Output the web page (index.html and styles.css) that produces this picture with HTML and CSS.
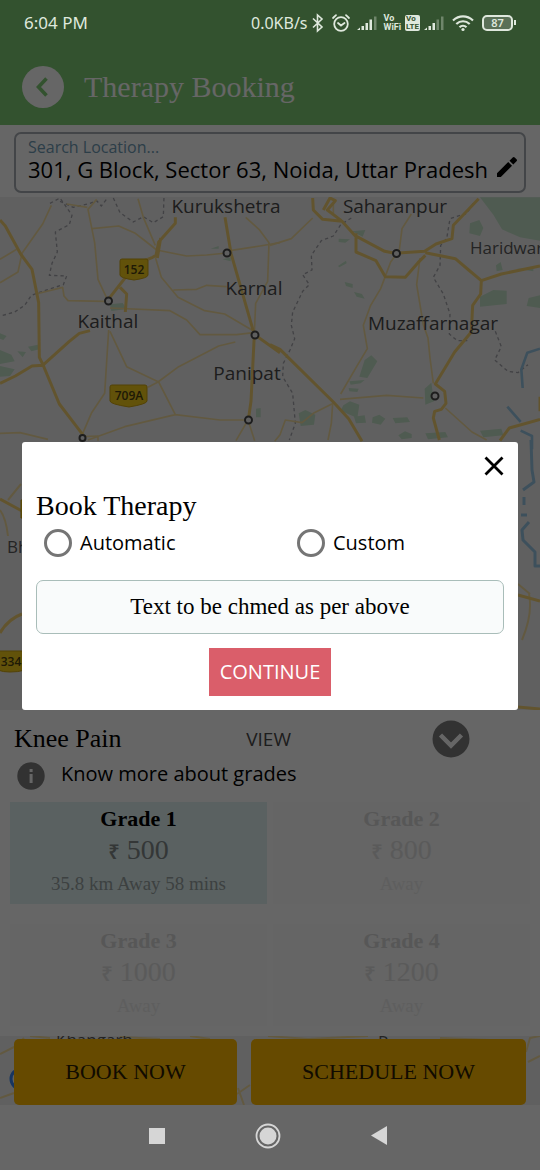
FILE: index.html
```html
<!DOCTYPE html>
<html lang="en">
<head>
<meta charset="utf-8">
<meta name="viewport" content="width=device-width, initial-scale=1">
<title>Therapy Booking</title>
<link rel="stylesheet" href="styles.css">
</head>
<body>
<div class="app">
  <div class="status">
    <span class="status-time">6:04 PM</span>
    <div class="status-icons">
      <span class="status-speed">0.0KB/s</span>
      <svg width="12" height="20" viewBox="0 0 12 20" fill="none" stroke="currentColor" stroke-width="1.6"><path d="M1 5.500l9 8.500-4.500 4V2l4.500 4-9 8.500"/></svg>
      <svg class="gap-s" width="20" height="20" viewBox="0 0 20 20" fill="none" stroke="currentColor" stroke-width="1.800" stroke-linecap="round"><circle cx="10" cy="11" r="6.800"/><path d="M2 5l3-2.800M18 5l-3-2.800M7 10l3 2.500 3.500-2.500"/></svg>
      <svg class="gap-t" width="20" height="16" viewBox="0 0 20 16" fill="currentColor"><path d="M0 15L3 12.500V15zM4.500 11H7v4H4.500zM8.500 8H11v7H8.500zM12.500 4.500H15V15h-2.500z"/><path opacity=".35" d="M17 1.500h2.500V15H17z"/></svg>
      <div class="status-vo"><div>Vo</div><div>WiFi</div></div>
      <div class="status-lte"><div>Vo</div><div>LTE</div></div>
      <svg width="20" height="16" viewBox="0 0 20 16" fill="currentColor"><path d="M0 15L3 12.500V15zM4.500 11H7v4H4.500zM8.500 8H11v7H8.500z"/><path opacity=".35" d="M12.500 4.500H15V15h-2.500zM17 1.500h2.500V15H17z"/></svg>
      <svg class="gap-m" width="22" height="18" viewBox="0 0 22 18" fill="none" stroke="currentColor" stroke-width="2.200"><path d="M1 6.500c6-5.400 14-5.400 20 0M4.300 10c4-3.700 9.400-3.700 13.400 0M7.500 13.300c2-1.900 5-1.900 7 0"/><circle cx="11" cy="15.500" r="1.600" fill="currentColor" stroke="none"/></svg>
      <div class="battery"><span class="battery-level">87</span><i class="battery-tip"></i></div>
    </div>
  </div>

  <header class="header">
    <button class="back" type="button" aria-label="Back">
      <svg width="18" height="22" viewBox="0 0 18 22" fill="none" stroke="currentColor" stroke-width="3.600"><path d="M12.500 2.500L4.500 11l8 8.500"/></svg>
    </button>
    <h1 class="title">Therapy Booking</h1>
  </header>

  <div class="search">
    <div class="search-box">
      <div class="search-field">
        <label class="search-label" for="loc">Search Location...</label>
        <input class="search-input" id="loc" type="text" value="301, G Block, Sector 63, Noida, Uttar Pradesh">
      </div>
      <button class="edit" type="button" aria-label="Edit location">
        <svg width="22" height="22" viewBox="0 0 22 22" fill="currentColor"><path d="M1 17.200V21h3.800L16 9.800 12.200 6zM20.500 5.300a1.400 1.400 0 000-2L18.700 1.500a1.400 1.400 0 00-2 0L13.500 4.700l3.800 3.800z"/></svg>
      </button>
    </div>
  </div>

  <main class="stage">
    <svg class="map" viewBox="0 197 540 908" preserveAspectRatio="xMidYMin slice" fill="none" stroke-linejoin="round">
      <g transform="translate(0 190) scale(.33333)">
        <g fill="#c5e3ca"><path d="M330 343l38-4 12 18-46 6zM0 430l20 8-10 12-10-4zM0 480l34 14 10 20-44 8zM52 484l26 2-10 16zM0 528l44 10-14 20-30 2zM84 470l30-6 4 14-24 6zM768 656l14-2v28h-14zM632 176l24-8v8zM668 208l24-6v12z"/></g>
        <g class="border"><path d="M150 40l30-16 14 20 22 32-8 28-42 22 6 60-16 34-8 36 52 2-10 26-50 16-46 16-20 30-30 20-42 12"/><path d="M180 34l40 18 50-12 20-8 14 16 20-26M340 24l20 44 40 28 30-16 30 18 30-18 2-60"/></g>
        <g class="road"><path d="M200 42l62 10M290 28l-26 30 20 100 10 110 28 60M154 46l-26 56-62 88-12 56-54 32M0 208l50-30M276 116l80-8 50 22 26 20 38 30 90 18 60-3 60-6M414 26l16 56 36 84M690 182l90-14 60-10M737 82l40 36 30 40-4 116-36 66-4 90M466 202l18 60 50 60 80 40 60 10 88 52M520 300l70-2 30-12 60 4M108 312l80-20 4 26 12 14 110 2M330 354l180 8 50 28 40 44h110l50-6M706 456l-50 12-120 62-62 46-30 16M326 420l-12 190-40 60-30 70M330 424l50 106 96 46 50 98-152 36-110 40M526 674l134 16h84M744 690l-36 62M744 690l20 62M0 730l60-2 84 20M248 740l46-2v14"/></g>
        <g class="highway"><path d="M0 90l16 18 46 84 34 46 20 100 2 164 10 20 50 120 72 94M128 526l80-72 30-24 32-8M128 526l-32 2-50 30-46 22M526 82v18l-50 56-8 40-10 6-50 20-86 110M482 144l-10 60M360 292l20 20-4 54M675 82l18 108 70 244-10 200-8 56M764 434l76 54"/></g>
      </g>
      <g transform="translate(270 190) scale(.33333)">
        <g fill="#c5e3ca"><path d="M630 22h180v130l-60-10-54-24-26-44zM600 100l28-10 12 24-10 24-32-8zM630 320l40-20 40 2v40l-80 8zM776 324l34-8v38l-40-6zM678 226l14-10 6 24-18 4zM284 510l20-14 18 18-30 50-24-4zM220 646l20-12 28 10-6 40-50-22zM86 670l20-10 30 14-4 30-40 4zM252 680l32-4 4 22-30 2zM308 682l20-8 18 12-14 18-26-6zM368 684l44-2 8 14-44 4zM385 736l20-12 20 8v12l-30 4zM466 730l60-4 8 16-60 6zM630 722l64-6 6 20-60 6zM246 124l40-4-8 20zM206 146l34 2-14 10-20-2zM204 228l24-16 2 8-22 12zM224 276l24 6v12l-20-6zM252 306l24 6 8 14-24-6zM464 596l20-18 8 56-26 10zM238 574l46-4-12 10-30 4zM236 594l30 2-4 10-24-2zM740 236l50-2v10z"/></g>
        <g class="border"><path d="M244 84l-32 20-22 34-36 14-30 44 2 44-28 14 20 30-20 20-30 62-4 40 10 40-14 34-20 40-2 40 30 50 8 90-18 50M610 40l-20 30-50 16-10 60-18 20-2 60-20 36 30 50 20 60-2 60 24 20h30M676 424l18 46-20 40 40 34 30 4 30-24"/></g>
        <g class="river"><path d="M810 476l-38 12-18 50 4 56M712 650l40 46M752 722l34 16v40"/></g>
        <g class="road"><path d="M0 166l64-20 64-62M190 40v30M424 72l-28 44-8 64-26 36-30 80-30 50-22 60 12 70-30 50-50 86M450 204l-10 80 20 120 14 40 6 60 10 76M210 628l140-12 110 8M190 640l-60 30-34 28-50-8-16 44-16 20M188 640l-4 60-10 50M526 654l80 72 44 24"/></g>
        <g class="highway"><path d="M128 24l2 36 28 28 58 6 38 42 90 48 30 6 90-6 34-22 48-16 4-40 76-80M160 60l20-36 16 8-24 28 42 32M258 130v56l60 26 28 48 60 2 38-44 22-22M466 188l90 18 40 34 38 32 60-20 116-24M634 272l-2 40-24 34-4 80-50 60-58 96 28 22 4 36-14 18-20 6-4 20 18 66M0 464l30 14 160 158 46 50 40 68M690 752l28-38 92-26M810 620v44"/></g>
      </g>
      <g class="river"><path d="M531 440l1 30 2 12-11 8M524 497v8M521 515h6M529 522l-7 8 1 10 12 12v14h5"/></g>
      <g class="road"><path d="M8 500l13-16M0 510q6 8 8 26M529 594q4 20-7 46M518 584l12 10"/></g>
      <g class="highway"><path d="M0 499l22 12M0 633q8-14 22-19M518 595l22 6M518 707l22 2"/></g>
      <g class="road"><path d="M0 1054l16-8 8-8M0 1098l14-5M30 1036l20 2M120 1037l40 2M190 1036l20 3M268 1036l40 3 60-3M237 1094l13-9M238 1088l6 17M440 1038l50 2M526 1052l4-14 10-2M528 1062l12-6"/></g>
      <circle cx="21" cy="1079" r="10" stroke="#3a86f0" stroke-width="3"/>
      <g class="town"><circle cx="227" cy="253" r="3.500"/><circle cx="108.500" cy="301" r="3.500"/><circle cx="255" cy="335" r="3.500"/><circle cx="248.500" cy="420" r="3.500"/><circle cx="82.500" cy="438" r="3"/><circle cx="396.500" cy="253.500" r="3.500"/><circle cx="435" cy="396" r="3.500"/></g>
      <g class="shield"><path d="M120 261q0-2 2-2h24q2 0 2 2v14q0 3-14 5-14-2-14-5zM110 387q0-2 2-2h33q2 0 2 2v14q0 3-18 6-19-3-19-6zM-8 651h40v14q-5 7-22 7-14 0-18-7zM21 500h10v18H21z"/></g>
      <g class="shield-text"><text x="134" y="274">152</text><text x="129" y="400">709A</text><text x="15" y="666">334B</text></g>
      <g class="city"><text x="226" y="213">Kurukshetra</text><text x="395" y="213">Saharanpur</text><text x="254" y="295">Karnal</text><text x="108" y="328">Kaithal</text><text x="433" y="330">Muzaffarnagar</text><text x="247" y="380">Panipat</text></g>
      <g class="place"><text x="470" y="254">Haridwar</text><text x="7" y="553">Bhiwani</text><text x="56" y="1046">Khangarh</text><text x="378" y="1048">Rampur</text></g>
    </svg>

    <section class="sheet">
      <div class="sheet-row">
        <h2 class="condition">Knee Pain</h2>
        <a class="view" href="#view">VIEW</a>
        <button class="toggle" type="button" aria-label="Collapse">
          <svg width="38" height="38" viewBox="0 0 38 38"><circle cx="19" cy="19" r="18.500" fill="#7d7d7d"/><path d="M8.500 15l10.500 10.500L29.500 15" fill="none" stroke="#fff" stroke-width="4.500"/></svg>
        </button>
      </div>
      <div class="info">
        <svg width="28" height="28" viewBox="0 0 28 28"><circle cx="14" cy="14" r="13.700" fill="#7d7d7d"/><path d="M12.600 7h3v3h-3zM12.600 12h3v9h-3z" fill="#fff"/></svg>
        <span class="info-text">Know more about grades</span>
      </div>
      <div class="grades">
        <button class="grade grade-on" type="button"><span class="grade-name">Grade 1</span><span class="grade-price"><span class="rupee">₹</span> 500</span><span class="grade-far">35.8 km Away 58 mins</span></button>
        <button class="grade" type="button"><span class="grade-name">Grade 2</span><span class="grade-price"><span class="rupee">₹</span> 800</span><span class="grade-far">Away</span></button>
        <button class="grade" type="button"><span class="grade-name">Grade 3</span><span class="grade-price"><span class="rupee">₹</span> 1000</span><span class="grade-far">Away</span></button>
        <button class="grade" type="button"><span class="grade-name">Grade 4</span><span class="grade-price"><span class="rupee">₹</span> 1200</span><span class="grade-far">Away</span></button>
      </div>
    </section>
    <div class="actions">
      <button class="action" type="button">BOOK NOW</button>
      <button class="action action-wide" type="button">SCHEDULE NOW</button>
    </div>
  </main>

  <nav class="nav">
    <button class="nav-btn" type="button" aria-label="Recent apps"><svg width="16" height="16" viewBox="0 0 16 16"><path d="M0 0h16v16H0z" fill="currentColor"/></svg></button>
    <button class="nav-btn" type="button" aria-label="Home"><svg width="26" height="26" viewBox="0 0 26 26"><circle cx="13" cy="13" r="11.500" fill="none" stroke="currentColor" stroke-width="1.800"/><circle cx="13" cy="13" r="8.500" fill="currentColor"/></svg></button>
    <button class="nav-btn" type="button" aria-label="Back"><svg width="16" height="19" viewBox="0 0 16 19"><path d="M16 0v19L0 9.500z" fill="currentColor"/></svg></button>
  </nav>

  <div class="overlay">
    <form class="dialog" role="dialog" aria-labelledby="dlg-title">
      <button class="close" type="button" aria-label="Close">
        <svg width="20" height="20" viewBox="0 0 20 20" fill="none" stroke="currentColor" stroke-width="2.800"><path d="M1.500 1.500l17 17M18.500 1.500l-17 17"/></svg>
      </button>
      <h2 class="dialog-title" id="dlg-title">Book Therapy</h2>
      <div class="options">
        <label class="option"><input class="radio" type="radio" name="mode">Automatic</label>
        <label class="option"><input class="radio" type="radio" name="mode">Custom</label>
      </div>
      <p class="note">Text to be chmed as per above</p>
      <button class="continue" type="button">CONTINUE</button>
    </form>
  </div>
</div>
</body>
</html>
```

FILE: styles.css
```css
* { box-sizing: border-box; }

body {
  margin: 0;
  background: #fff;
  color: #000;
  font-family: "Open Sans", "Noto Sans", sans-serif;
}

button {
  margin: 0;
  padding: 0;
  border: 0;
  background: none;
  color: inherit;
  font: inherit;
}

h1, h2, p { margin: 0; font-weight: 400; }
svg { display: block; flex: none; }

.app {
  position: relative;
  display: flex;
  flex-direction: column;
  min-height: 100vh;
  overflow: hidden;
}

/* System status bar, kept bright over the backdrop */
.status {
  display: flex;
  align-items: center;
  justify-content: space-between;
  height: 45px;
  padding: 0 24px;
  position: relative;
  z-index: 2;
  color: #dfe8dd;
  font-family: "Noto Sans", sans-serif;
  font-size: 17px;
}
.status-icons { display: flex; align-items: center; gap: 4px; }
.status-speed { font-size: 16px; }
.gap-s { margin-left: 3px; }
.gap-t { margin-left: 2px; }
.gap-m { margin-left: 4px; }
.status-vo, .status-lte {
  font-family: Roboto, sans-serif;
  font-size: 9px;
  line-height: 9px;
  font-weight: 700;
}
.status-vo { margin-left: 3px; }
.status-lte {
  padding: 0 1px;
  border-radius: 2px;
  background: #dfe8dd;
  color: #33522f;
  font-size: 8px;
  line-height: 8px;
}
.battery { display: flex; align-items: center; gap: 1px; margin-left: 4px; }
.battery-level {
  width: 31px;
  border: 2px solid currentColor;
  border-radius: 5px;
  background: #5a7057;
  font-size: 11px;
  line-height: 12px;
  font-weight: 600;
  text-align: center;
}
.battery-tip { width: 2px; height: 5px; background: currentColor; }

.header {
  display: flex;
  align-items: center;
  gap: 20px;
  height: 125px;
  margin-top: -45px;
  padding: 48px 22px 0;
  background: #80cd76;
}
.back {
  display: grid;
  place-items: center;
  width: 42px;
  height: 42px;
  border-radius: 50%;
  background: #fff;
  color: #80cd76;
}
.title { font-family: "Liberation Serif", serif; font-size: 30px; color: #fff; }

.search { padding: 7px 14px 4px; }
.search-box {
  display: flex;
  align-items: center;
  padding: 3px 6px 7px 12px;
  border: 2px solid #a8adb3;
  border-radius: 7px;
}
.search-field { flex: 1; min-width: 0; }
.search-label { display: block; font-size: 16px; line-height: 20px; color: #6f9bb5; }
.search-input {
  display: block;
  width: 100%;
  height: 27px;
  padding: 0 0 4px;
  border: 0;
  background: none;
  color: #000;
  font-family: inherit;
  font-size: 22px;
}
.edit { padding-top: 12px; }

.stage {
  position: relative;
  flex: 1;
  display: flex;
  flex-direction: column;
  justify-content: flex-end;
}
.map { position: absolute; inset: 0; width: 100%; height: 100%; background: #f0f0f0; }
.road { stroke: #f5dea0; stroke-width: 5; }
.highway { stroke: #f5d273; stroke-width: 9; }
.map > .road { stroke-width: 2; }
.map > .highway { stroke-width: 3; }
.border { stroke: #a5a5ac; stroke-width: 4; stroke-dasharray: 10 9; }
.river { stroke: #9ac8e6; stroke-width: 8; }
.map > .river { stroke-width: 3; }
.town { fill: #eee; stroke: #4a4a4a; stroke-width: 2; }
.shield { fill: #f5cc1a; stroke: #cfa510; stroke-width: 1; }
.shield-text { fill: #4c4210; font-size: 12px; font-weight: 600; text-anchor: middle; }
.city { fill: #4a4a4a; font-size: 19px; text-anchor: middle; }
.place { fill: #5a5a5a; font-size: 17px; }

.sheet { position: relative; padding: 10px; background: #fff; }
.sheet-row {
  display: grid;
  grid-template-columns: 45fr 36fr 19fr;
  align-items: center;
  padding-left: 4px;
}
.condition { font-family: "Liberation Serif", serif; font-size: 26px; }
.view { font-size: 19px; line-height: 36px; color: #4a4a4a; text-decoration: none; }
.toggle { justify-self: start; }
.info {
  display: flex;
  align-items: flex-end;
  gap: 16px;
  padding: 0 7px 12px;
  font-size: 20px;
}
.info-text { line-height: 32px; }
.grades { display: grid; grid-template-columns: 1fr 1fr; gap: 20px 6px; }
.grade {
  display: flex;
  flex-direction: column;
  align-items: center;
  padding: 2px 0 4px;
  background: #fcfcfc;
  color: #ececec;
  font-family: "Liberation Serif", serif;
}
.grade-name { font-size: 22px; line-height: 30px; font-weight: 700; color: #d9d9d9; }
.grade-price { font-size: 28px; line-height: 31px; color: #e2e2e2; }
.rupee { font-family: "Noto Sans", sans-serif; font-size: 20px; line-height: 20px; font-weight: 600; }
.grade-far { font-size: 19px; line-height: 32px; margin-top: 3px; }
.grade-on { background: #e1f2f2; }
.grade-on .grade-name { color: #000; }
.grade-on .grade-price { color: #828a8a; }
.grade-on .grade-far { color: #98a2a2; }

.actions { position: relative; display: flex; gap: 14px; padding: 3px 14px 0; }
.action {
  flex: 223;
  height: 66px;
  border-radius: 5px;
  background: #ffb800;
  color: #2c1c00;
  font-family: "Liberation Serif", serif;
  font-size: 22px;
}
.action-wide { flex: 275; }

/* System navigation bar */
.nav {
  position: relative;
  z-index: 2;
  display: flex;
  align-items: center;
  justify-content: center;
  gap: 85px;
  height: 65px;
  padding: 0 4px 4px 0;
  color: #d6d6d6;
}
.nav-btn { display: grid; place-items: center; min-width: 26px; }

.overlay {
  position: absolute;
  inset: 0;
  z-index: 1;
  display: flex;
  flex-direction: column;
  justify-content: center;
  padding: 0 22px 18px;
  background: rgba(0, 0, 0, 0.6);
}
.dialog {
  display: flex;
  flex-direction: column;
  padding: 14px;
  border-radius: 3px;
  background: #fff;
}
.close { align-self: flex-end; }
.dialog-title {
  margin-top: 12px;
  font-family: "Liberation Serif", serif;
  font-size: 28px;
  line-height: 36px;
}
.options { display: grid; grid-template-columns: 55fr 45fr; padding-left: 8px; }
.option { display: flex; align-items: center; gap: 8px; font-size: 20px; line-height: 38px; }
.radio {
  appearance: none;
  width: 28px;
  height: 28px;
  margin: 0;
  border: 3px solid #757575;
  border-radius: 50%;
}
.note {
  margin-top: 18px;
  border: 1px solid #a9bdb9;
  border-radius: 7px;
  background: #f9fbfb;
  font-family: "Liberation Serif", serif;
  font-size: 23px;
  line-height: 52px;
  text-align: center;
}
.continue {
  align-self: center;
  margin-top: 14px;
  padding: 0 11px;
  background: #da5e6a;
  color: #fff;
  font-size: 20px;
  line-height: 48px;
}
```
